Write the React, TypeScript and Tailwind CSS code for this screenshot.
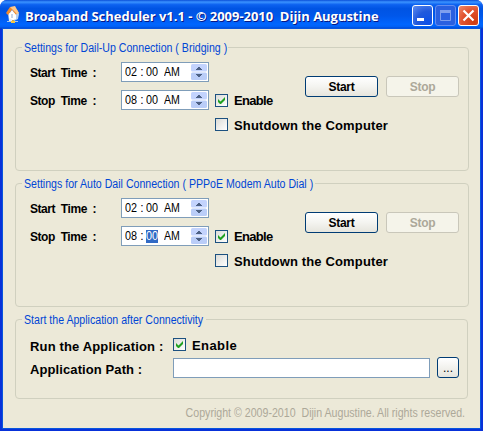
import type { ReactNode } from 'react';

const sans = "font-['Liberation_Sans',Arial,sans-serif]";

function AppIcon() {
  return (
    <svg width="16" height="18" viewBox="0 0 16 18" className="shrink-0">
      <path d="M2 7h6v8H3z" fill="#e4ecf6" />
      <path d="M8 7l3-3 2 4-1 5-4 2z" fill="#b7d0ee" />
      <path d="M0 7L4 1l4 1 3 5-1 2-4-5-4 5z" fill="#f28a2c" />
      <path d="M4 1l5-1 4 7-2 1z" fill="#ffc98a" />
      <path d="M6 4l4 5v4l-3 1-4-2V8z" fill="#fff" />
      <path d="M5 8h2v4H5z" fill="#c7d5e9" />
      <path d="M6 14h2v2H6z" fill="#c9a94a" />
      <path d="M1 15h11v1H1z" fill="#a8c7e8" />
      <path d="M5 15h4v2H5z" fill="#f5c643" />
    </svg>
  );
}

function TitleBar() {
  return (
    <div className="flex h-[29px] shrink-0 items-center rounded-t-[7px] bg-[linear-gradient(to_bottom,#0a4fd8_0%,#3b93ff_7%,#0d62f0_16%,#0054e3_30%,#0057ea_55%,#0066ff_84%,#0060f5_92%,#003dc4_100%)] pl-[6px] pr-[4px]">
      <AppIcon />
      <h1 className="ml-[3px] mt-[3px] flex-1 whitespace-pre font-['Open_Sans',sans-serif] text-[13px] font-bold leading-[16px] tracking-[-0.03px] text-white [text-shadow:1px_1px_0_#0a1883]">
        Broaband Scheduler v1.1 - © 2009-2010  Dijin Augustine
      </h1>
      <div className="mt-[2px] flex gap-[2px]">
        <CaptionButton className="border-white bg-[radial-gradient(circle_at_80%_85%,#0c50e8,#2159dc_50%,#5f8df0)]">
          <path d="M4 12h7v3H4z" fill="#fff" />
        </CaptionButton>
        <CaptionButton className="border-[#648df0] bg-[#2a60e0]">
          <path d="M4.500 4.500h10v10h-10z" fill="none" stroke="#7e9fee" />
          <path d="M4 4h11v3H4z" fill="#7e9fee" />
        </CaptionButton>
        <CaptionButton className="border-white bg-[radial-gradient(circle_at_80%_85%,#cf3b10,#e1532f_55%,#f08a6b)]">
          <path d="M4.500 4.500l10 10M14.500 4.500l-10 10" stroke="#fff" strokeWidth="2.200" />
        </CaptionButton>
      </div>
    </div>
  );
}

function CaptionButton({ className, children }: { className: string; children: ReactNode }) {
  return (
    <button className={`h-[21px] w-[21px] overflow-hidden rounded-[3px] border ${className}`}>
      <svg width="19" height="19" viewBox="0 0 19 19">{children}</svg>
    </button>
  );
}

function Group({ title, titleClass, className, children }: { title: string; titleClass: string; className: string; children: ReactNode }) {
  return (
    <section className={`relative shrink-0 rounded-[4px] border border-[#d0d0bf] ${className}`}>
      <h2 className={`absolute -top-[8px] left-[6px] whitespace-pre bg-[#ece9d8] pl-[2px] text-[12px] leading-[16px] text-[#0046d5] ${titleClass}`}>
        <span className="inline-block origin-left scale-x-[0.883]">{title}</span>
      </h2>
      {children}
    </section>
  );
}

function TimeField({ hour, selected }: { hour: string; selected?: boolean }) {
  return (
    <div className="col-start-2 flex h-[20px] w-[88px] items-center border border-[#7f9db9] bg-white pl-[3px] pr-px text-[12px] leading-[14px] text-black">
      <span className="w-[13px] origin-left scale-x-90">{hour}</span>
      <span className="w-[8px] text-center">:</span>
      <span className={`h-[13px] w-[12px] leading-[13px] ${selected ? 'bg-[#316ac5] text-white' : ''}`}>
        <span className="inline-block origin-left scale-x-90">00</span>
      </span>
      <span className="ml-[6px] flex-1 origin-left scale-x-[0.88]">AM</span>
      <svg width="16" height="16" viewBox="0 0 16 16" className="shrink-0">
        <rect width="16" height="7.500" rx="1.500" fill="#c3d3fd" />
        <rect y="8.500" width="16" height="7.500" rx="1.500" fill="#bacdf8" />
        <path d="M5 6h6V5h-1V4H9V3H7v1H6v1H5z" fill="#4d6185" />
        <path d="M5 10h6v1h-1v1H9v1H7v-1H6v-1H5z" fill="#4d6185" />
      </svg>
    </div>
  );
}

function CheckBox({ label, checked, labelClass }: { label: string; checked?: boolean; labelClass: string }) {
  return (
    <label className="flex items-start">
      <span className="h-[13px] w-[13px] shrink-0 border border-[#1c5180] bg-linear-to-br from-[#dcdcd7] to-white">
        {checked && (
          <svg width="11" height="11" viewBox="0 0 11 11">
            <path d="M2 4v3l2 2h1l4-4V2L4.500 6.500z" fill="#21a121" />
          </svg>
        )}
      </span>
      <span className={`ml-[6px] whitespace-nowrap text-[13px] font-bold leading-[14px] text-black ${labelClass}`}>{label}</span>
    </label>
  );
}

function PushButton({ label, disabled }: { label: string; disabled?: boolean }) {
  return (
    <button
      disabled={disabled}
      className={`h-[21px] w-[73px] rounded-[3px] border text-[12px] font-bold leading-[18px] tracking-[-0.3px] ${
        disabled
          ? 'border-[#c9c7ba] bg-[#f5f4ea] text-[#aca899]'
          : 'border-[#003c74] bg-linear-to-b from-white via-[#f4f4f0] to-[#e6e5dd] text-black'
      }`}
    >
      {label}
    </button>
  );
}

function ScheduleForm({ selected }: { selected?: boolean }) {
  return (
    <div className="grid grid-cols-[91px_94px_90px_154px] grid-rows-[20px_20px_20px] gap-y-[8px] pl-[14px] pt-[14px]">
      <TimeLabel text="Start  Time  :" />
      <TimeField hour="02" />
      <div className="col-start-4 row-span-2 row-start-1 flex gap-[8px] pt-[14px]">
        <PushButton label="Start" />
        <PushButton label="Stop" disabled />
      </div>
      <TimeLabel text="Stop  Time  :" />
      <TimeField hour="08" selected={selected} />
      <div className="col-start-3 row-start-2 pt-[4px]">
        <CheckBox label="Enable" checked labelClass="tracking-[-0.7px]" />
      </div>
      <div className="col-span-2 col-start-3 row-start-3">
        <CheckBox label="Shutdown the Computer" labelClass="pt-px tracking-[0.15px]" />
      </div>
    </div>
  );
}

function TimeLabel({ text }: { text: string }) {
  return <span className="col-start-1 whitespace-pre pt-[4px] text-[12px] font-bold leading-[14px] tracking-[-0.45px] text-black">{text}</span>;
}

export default function App() {
  return (
    <div className="bg-white">
      <div className={`flex h-[431px] w-[483px] flex-col rounded-t-[7px] bg-[#0831d9] ${sans}`}>
        <TitleBar />
        <main className="mx-[3px] mb-[3px] flex flex-1 flex-col bg-[#ece9d8] pl-[12px] pt-[18px] shadow-[0_0_0_1px_#0855dd]">
          <Group title="Settings for Dail-Up Connection ( Bridging )" titleClass="w-[206px]" className="h-[124px] w-[454px]">
            <ScheduleForm />
          </Group>
          <Group title="Settings for Auto Dail Connection ( PPPoE Modem Auto Dial )" titleClass="w-[293px]" className="mt-[12px] h-[124px] w-[454px]">
            <ScheduleForm selected />
          </Group>
          <Group title="Start the Application after Connectivity" titleClass="w-[184px]" className="mt-[12px] h-[80px] w-[453px]">
            <div className="flex pl-[14px] pt-[18px]">
              <span className="w-[143px] pt-px text-[13px] font-bold leading-[15px] tracking-[0.15px]">Run the Application :</span>
              <CheckBox label="Enable" checked labelClass="pt-px tracking-[0.4px]" />
            </div>
            <div className="flex items-center pl-[14px] pt-[3px]">
              <span className="w-[143px] pt-[4px] text-[13px] font-bold leading-[16px] tracking-[0.1px]">Application Path :</span>
              <input className="h-[20px] w-[257px] border border-[#7f9db9] bg-white outline-none" />
              <button className="ml-[7px] h-[21px] w-[22px] rounded-[3px] border border-[#003c74] bg-linear-to-b from-white to-[#e6e5dd] text-[12px] leading-[18px] text-black">...</button>
            </div>
          </Group>
          <footer className="mt-[7px] w-[450px] origin-right scale-x-[0.885] whitespace-pre text-right text-[12px] leading-[14px] text-[#aca899]">
            Copyright © 2009-2010  Dijin Augustine. All rights reserved.
          </footer>
        </main>
      </div>
    </div>
  );
}
